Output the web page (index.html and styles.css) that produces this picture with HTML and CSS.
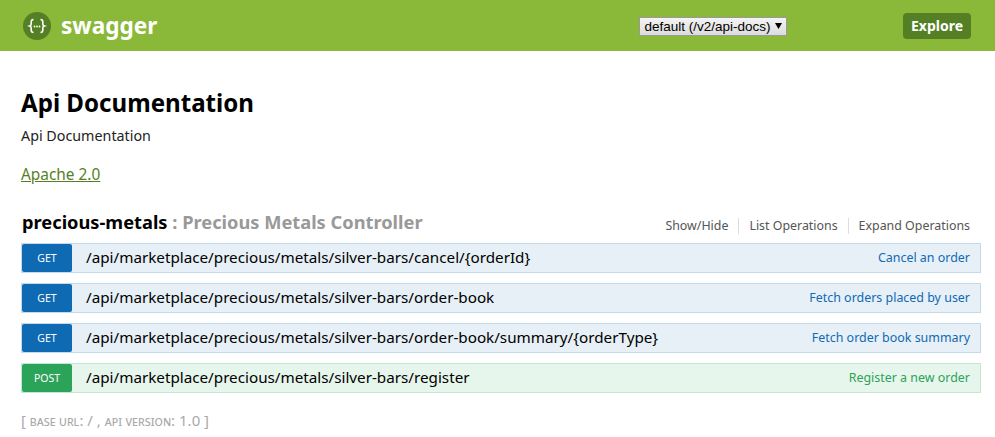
FILE: index.html
```html
<!DOCTYPE html>
<html lang="en">
<head>
  <meta charset="UTF-8">
  <title>Swagger UI</title>
  <link rel="stylesheet" href="styles.css">
</head>
<body>

  <header class="topbar">
    <a class="logo" href="#">
      <span class="logo-badge">
        <svg width="30" height="30" viewBox="0 0 30 30">
          <circle cx="15" cy="15" r="14" fill="#547f25"/>
          <path d="M11.500 8.500c-1.800 0-2.300 1-2.300 2.500v2c0 1-.5 1.700-1.500 2 1 .3 1.500 1 1.500 2v2c0 1.500.5 2.500 2.300 2.500M18.500 8.500c1.800 0 2.300 1 2.300 2.500v2c0 1 .5 1.700 1.500 2-1 .3-1.500 1-1.500 2v2c0 1.500-.5 2.500-2.300 2.500" fill="none" stroke="#fff" stroke-width="1.600"/>
          <circle cx="12.500" cy="15.500" r=".9" fill="#fff"/>
          <circle cx="15" cy="15.500" r=".9" fill="#fff"/>
          <circle cx="17.500" cy="15.500" r=".9" fill="#fff"/>
        </svg>
      </span>
      <span class="logo-text">swagger</span>
    </a>
    <select class="spec-select">
      <option>default (/v2/api-docs)</option>
    </select>
    <a class="explore" href="#">Explore</a>
  </header>

  <main class="content">
    <h1>Api Documentation</h1>
    <p class="desc">Api Documentation</p>
    <a class="license" href="#">Apache 2.0</a>

    <div class="resource-head">
      <h2><span class="res-name">precious-metals</span><span class="res-sub"> : Precious Metals Controller</span></h2>
      <ul class="res-links">
        <li>Show/Hide</li>
        <li>List Operations</li>
        <li>Expand Operations</li>
      </ul>
    </div>

    <div class="op op-get">
      <span class="method">GET</span>
      <span class="path">/api/marketplace/precious/metals/silver-bars/cancel/{orderId}</span>
      <span class="summary">Cancel an order</span>
    </div>
    <div class="op op-get">
      <span class="method">GET</span>
      <span class="path">/api/marketplace/precious/metals/silver-bars/order-book</span>
      <span class="summary">Fetch orders placed by user</span>
    </div>
    <div class="op op-get">
      <span class="method">GET</span>
      <span class="path">/api/marketplace/precious/metals/silver-bars/order-book/summary/{orderType}</span>
      <span class="summary">Fetch order book summary</span>
    </div>
    <div class="op op-post">
      <span class="method">POST</span>
      <span class="path">/api/marketplace/precious/metals/silver-bars/register</span>
      <span class="summary">Register a new order</span>
    </div>

    <p class="base-info">[ <span class="sc">base url</span>: / , <span class="sc">api version</span>: 1.0 ]</p>
  </main>

</body>
</html>
```

FILE: styles.css
```css
body {
  font-family: "Noto Sans", "Open Sans", sans-serif;
  background: #fff;
  color: #000;
  margin: 0;
  padding: 0;
  overflow: hidden;
}

a {
  text-decoration: none;
}

.topbar {
  height: 51px;
  background: #8ab93a;
  display: flex;
  align-items: center;
  padding: 0 24px 0 22px;
}

.logo {
  display: flex;
  align-items: center;
  gap: 9px;
  color: #fff;
}

.logo-badge {
  display: flex;
}

.logo-text {
  font-size: 22.6px;
  font-weight: 700;
}

.spec-select {
  appearance: none;
  margin: 2px 0 0 482px;
  width: 148px;
  height: 19px;
  font-family: "Liberation Sans", sans-serif;
  font-size: 13.5px;
  color: #000;
  padding: 0 0 0 4px;
  border: 1px solid #999;
  border-radius: 0;
  background:
    url("data:image/svg+xml,%3Csvg xmlns='http://www.w3.org/2000/svg' width='7' height='6'%3E%3Cpath d='M0 0h7L3.500 6z' fill='%23000'/%3E%3C/svg%3E") no-repeat right 4px top 5px,
    linear-gradient(#f4f4f4, #dcdcdc);
}

.explore {
  margin-left: auto;
  background: #547f25;
  color: #fff;
  font-size: 14px;
  font-weight: 700;
  padding: 3px 8px;
  height: 20px;
  line-height: 20px;
  border-radius: 4px;
}

.content {
  padding: 0 14px 0 21px;
}

h1 {
  font-size: 24.1px;
  line-height: 32px;
  font-weight: 700;
  margin: 36px 0 0;
}

.desc {
  font-size: 14.3px;
  line-height: 20px;
  margin: 7px 0 0;
  color: #222;
}

.license {
  display: block;
  width: max-content;
  margin-top: 18px;
  font-size: 15.4px;
  line-height: 22px;
  color: #547f25;
  text-decoration: underline;
}

.resource-head {
  display: flex;
  justify-content: space-between;
  align-items: flex-end;
  margin-top: 25px;
  height: 32px;
  padding-left: 1px;
}

h2 {
  font-size: 18.25px;
  line-height: 26px;
  font-weight: 700;
  margin: 0 0 8px;
}

.res-sub {
  color: #999;
}

.res-links {
  display: flex;
  list-style: none;
  margin: 0 1px 9px 0;
  padding: 0;
  font-size: 12.4px;
  color: #555;
}

.res-links li {
  padding: 0 10px;
  line-height: 16px;
  border-right: 1px solid #ddd;
}

.res-links li:last-child {
  border-right: none;
}

.op {
  display: flex;
  align-items: center;
  height: 28px;
  margin-bottom: 10px;
  border: 1px solid;
}

.op-get {
  background: #e7f0f7;
  border-color: #c3d9ec;
}

.op-post {
  background: #e7f6ec;
  border-color: #c3e8d1;
}

.method {
  width: 50px;
  height: 28px;
  line-height: 28px;
  text-align: center;
  color: #fff;
  font-size: 10.5px;
  border-radius: 2px;
  flex: none;
}

.op-get .method {
  background: #0f6ab4;
}

.op-post .method {
  background: #2ba358;
}

.path {
  margin-left: 14px;
  margin-bottom: 2px;
  font-size: 15.23px;
  color: #000;
}

.summary {
  margin-left: auto;
  margin-bottom: 1px;
  padding-right: 10px;
  font-size: 12.45px;
}

.op-get .summary {
  color: #0f6ab4;
}

.op-post .summary {
  color: #2ba358;
}

.base-info {
  margin: 17px 0 0;
  font-size: 15px;
  line-height: 20px;
  color: #aaa;
}

.sc {
  font-variant: small-caps;
  font-size: 13.2px;
}
```
